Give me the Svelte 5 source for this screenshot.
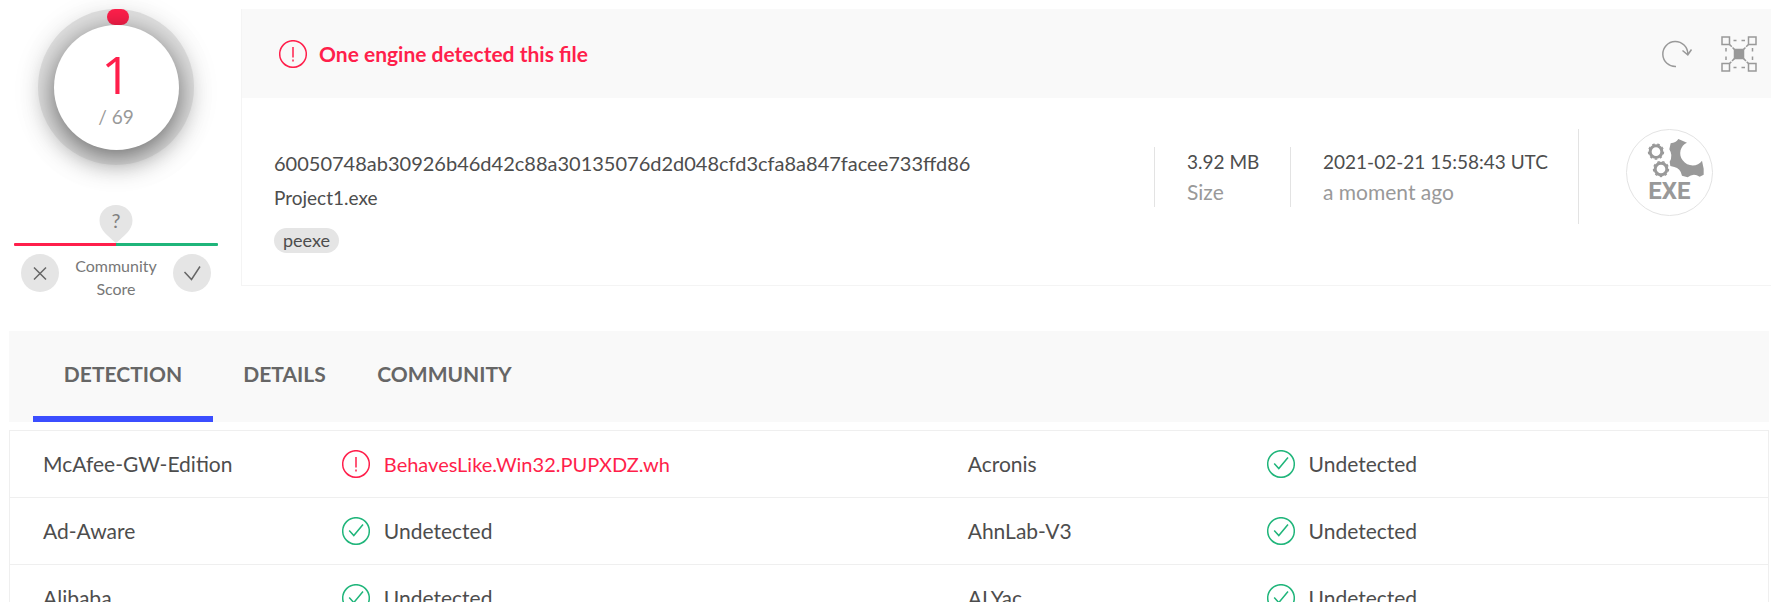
<script>

let tabs = ['Detection', 'Details', 'Community'];
let active = 'Detection';

let engines = [
  ['McAfee-GW-Edition', 'BehavesLike.Win32.PUPXDZ.wh', 'Acronis', ''],
  ['Ad-Aware', '', 'AhnLab-V3', ''],
  ['Alibaba', '', 'ALYac', ''],
];

</script>

{#snippet verdictIcon(bad)}
  <svg class="verdict-icon {bad ? 'bad' : 'good'}" viewBox="0 0 28 28" aria-hidden="true">
    <circle cx="14" cy="14" r="13.3" />
    {#if bad}
      <path d="M14 7v10.5M14 19.5v2" />
    {:else}
      <path d="M7.2 13.6l4.6 5L21 7.6" />
    {/if}
  </svg>
{/snippet}

{#snippet verdict(name)}
  <div class="verdict">
    {@render verdictIcon(name)}
    <span class={name ? 'danger' : ''}>{name || 'Undetected'}</span>
  </div>
{/snippet}

<div class="page">
  <div class="summary">
    <aside>
      <div class="ring">
        <div class="ring-mark"></div>
        <div class="ring-inner">
          <strong>1</strong>
          <span>/ 69</span>
        </div>
      </div><!--ring-->
      <svg class="pin" viewBox="0 0 34 38" role="img" aria-label="Unknown score">
        <path d="M17 0C7.600 0 .5 6.500 .5 15.500C.5 25 9 31 17 38C25 31 33.500 25 33.500 15.500C33.500 6.500 26.400 0 17 0Z" fill="#e5e5e5" />
        <text x="17" y="23" text-anchor="middle">?</text>
      </svg>
      <div class="score-bar"></div>
      <div class="score">
        <button aria-label="Vote harmful">
          <svg viewBox="0 0 38 38"><path d="M13 13.500l12 12M25 13.500l-12 12" /></svg>
        </button>
        <span>Community Score</span>
        <button aria-label="Vote harmless">
          <svg viewBox="0 0 38 38"><path d="M11.500 18l7 7.500L27 12.500" /></svg>
        </button>
      </div><!--score-->
    </aside>

    <section class="card">
      <header>
        {@render verdictIcon(true)}
        <h1>One engine detected this file</h1>
        <button aria-label="Reanalyze">
          <svg width="32" height="28" viewBox="0 0 32 28">
            <path d="M15 26.500A12.500 12.500 0 1 1 26.800 14M21.500 10.500l5.300 4.300L30.500 9.500" fill="none" stroke="#999" stroke-width="1.500" />
          </svg>
        </button>
        <button aria-label="Open in graph">
          <svg width="36" height="36" viewBox="0 0 36 36" fill="none" stroke="#999" stroke-width="1.500">
            <path d="M8 8l20 20M28 8L8 28" stroke-dasharray="4 1" />
            <path d="M12.500 4.500h3M20.500 4.500h3.500M12.500 31.500h3M20.500 31.500h3.500M5 12v3.500M5 20.500v3.500M31.500 12v3.500M31.500 20.500v3.500" />
            <path d="M1 1h7.500v7.500H1zM27.500 1H35v7.500h-7.500zM1 27.500h7.500V35H1zM27.500 27.500H35V35h-7.500z" />
            <rect x="13.500" y="13.500" width="9" height="9" fill="#999" />
          </svg>
        </button>
      </header>
      <div class="card-body">
        <div class="file">
          <div class="hash">60050748ab30926b46d42c88a30135076d2d048cfd3cfa8a847facee733ffd86</div>
          <div class="filename">Project1.exe</div>
          <a class="chip" href="#peexe">peexe</a>
        </div>
        <div class="meta size">
          <div>3.92 MB</div>
          <div class="muted">Size</div>
        </div>
        <div class="meta date">
          <div>2021-02-21 15:58:43 UTC</div>
          <div class="muted">a moment ago</div>
        </div>
        <div class="file-type">
          <svg viewBox="198 57 261 261" role="img" aria-label="EXE file">
            <circle cx="328.500" cy="187.500" r="129" fill="#fff" stroke="#e3e3e3" stroke-width="3" />
            <g fill="none" stroke="#999">
              <circle cx="288" cy="125" r="17.500" stroke-width="9" />
              <circle cx="288" cy="125" r="22.500" stroke-width="4" pathLength="18" stroke-dasharray="1 1" />
              <circle cx="303" cy="177" r="17.500" stroke-width="9" />
              <circle cx="303" cy="177" r="22.500" stroke-width="4" pathLength="18" stroke-dasharray="1 1" />
            </g>
            <path fill="#999" d="M355 87L381 98C361 106 354 133 368 151C383 172 414 171 426 152L431 176V194L419 200Q400 188 383 202L366 197Q361 174 343 171L331 168L329 155Q340 137 328 118L332 100Q348 98 355 87Z" />
            <text x="328" y="267" text-anchor="middle">EXE</text>
          </svg>
        </div>
      </div><!--card-body-->
    </section>
  </div><!--summary-->

  <nav>
    {#each tabs as tab}
      <button class="tab {tab.toLowerCase()} {tab == active ? 'active' : ''}" on:click={() => active = tab}>{tab}</button>
    {/each}
  </nav>

  <table>
    <tbody>
      {#each engines as row}
        <tr>
          <td class="engine first">{row[0]}</td>
          <td class="result">{@render verdict(row[1])}</td>
          <td class="engine">{row[2]}</td>
          <td>{@render verdict(row[3])}</td>
        </tr>
      {/each}
    </tbody>
  </table>
</div><!--page-->

<style>

:global(body) {
  margin: 0;
  background: #fff;
}

.page {
  height: 100vh;
  box-sizing: border-box;
  overflow: hidden;
  padding: 9px 15px 0 9px;
  font-family: Lato, sans-serif;
  font-size: 20px;
  line-height: 30px;
  color: #4d4d4d;
}

button {
  font: inherit;
  color: inherit;
  border: 0;
  padding: 0;
  background: none;
  cursor: pointer;
}

svg {
  display: block;
}

.summary {
  display: flex;
  gap: 18px;
}

aside {
  width: 214px;
  flex: none;
  display: flex;
  flex-direction: column;
  align-items: center;
  margin-bottom: -14px;
}

.ring {
  position: relative;
  width: 156px;
  height: 156px;
  border-radius: 50%;
  background: #e0e0e0;
  display: grid;
  place-items: center;
  box-shadow: 0 4px 28px rgba(0,0,0,0.1);
}

.ring-mark {
  position: absolute;
  top: 0;
  left: 69px;
  width: 22px;
  height: 16px;
  border-radius: 8px;
  background: #ff1f4b;
}

.ring-inner {
  position: relative;
  width: 125px;
  height: 125px;
  border-radius: 50%;
  background: #fff;
  display: flex;
  flex-direction: column;
  align-items: center;
  box-shadow: 0 7px 28px rgba(0,0,0,0.55);
}

.ring-inner strong {
  margin-top: 20px;
  font-family: "Open Sans", sans-serif;
  font-size: 52px;
  line-height: 57px;
  font-weight: normal;
  color: #ff1f4b;
}

.ring-inner span {
  font-size: 19px;
  color: #999;
}

.pin {
  width: 34px;
  height: 38px;
  margin-top: 40px;
}

.pin text {
  font-size: 20px;
  fill: #808080;
}

.score-bar {
  width: 204px;
  height: 3px;
  border-radius: 1px;
  background: linear-gradient(to right, #ff1f4b 50%, #1fb57a 50%);
}

.score {
  display: flex;
  gap: 8px;
  margin-top: 8px;
  font-size: 16px;
  line-height: 23px;
  text-align: center;
  color: #777;
}

.score span {
  width: 98px;
}

.score button {
  width: 38px;
  height: 38px;
  border-radius: 50%;
  background: #e5e5e5;
}

.score path {
  fill: none;
  stroke: #666;
  stroke-width: 1.5;
}

.card {
  flex: 1;
  border: 1px solid #f4f4f4;
  border-width: 0 0 1px 1px;
}

header {
  display: flex;
  align-items: center;
  gap: 12px;
  height: 89px;
  box-sizing: border-box;
  padding: 0 14px 0 37px;
  background: #f9f9f9;
}

h1 {
  flex: 1;
  margin: 0;
  font-size: 21px;
  font-weight: bold;
  color: #ff1f4b;
}

header button + button {
  margin-left: 16px;
}

.verdict-icon {
  width: 28px;
  height: 28px;
  flex: none;
  fill: none;
  stroke-width: 1.5;
}

.bad {
  stroke: #ff1f4b;
}

.good {
  stroke: #1fb57a;
}

.card-body {
  display: flex;
  align-items: flex-start;
  padding: 31px 0 32px;
}

.file {
  flex: 1;
  padding: 19px 0 0 32px;
}

.filename {
  margin-top: 5px;
  font-size: 19px;
}

.chip {
  display: block;
  width: fit-content;
  margin-top: 15px;
  padding: 0 9px;
  border-radius: 13px;
  font-size: 18px;
  line-height: 25px;
  color: inherit;
  text-decoration: none;
  background: #e5e5e5;
}

.meta {
  box-sizing: border-box;
  margin-top: 18px;
  padding-left: 32px;
  border-left: 1px solid #e3e3e3;
  font-size: 19px;
}

.meta.size {
  width: 136px;
}

.meta.date {
  width: 288px;
}

.muted {
  font-size: 21px;
  color: #999;
}

.file-type {
  padding: 0 58px 8px 47px;
  border-left: 1px solid #e3e3e3;
}

.file-type svg {
  width: 87px;
  height: 87px;
}

.file-type text {
  font: bold 72px Roboto, sans-serif;
  fill: #999;
}

nav {
  display: flex;
  height: 91px;
  margin: 45px 2px 8px 0;
  padding-left: 24px;
  background: #f9f9f9;
}

.tab {
  box-sizing: border-box;
  padding: 0 0 6px;
  font-size: 21px;
  font-weight: bold;
  text-transform: uppercase;
  color: #666;
}

.tab.detection {
  width: 180px;
}

.tab.details {
  width: 143px;
}

.tab.community {
  width: 177px;
}

.tab.active {
  padding-bottom: 0;
  border-bottom: 6px solid #3b4eff;
}

table {
  width: calc(100% - 2px);
  table-layout: fixed;
  border-collapse: separate;
  border-spacing: 0;
  border: 1px solid #efefef;
  font-size: 21px;
}

td {
  height: 66px;
  padding: 0;
  border-bottom: 1px solid #efefef;
}

tr {
  height: 67px;
}

.engine {
  width: 17%;
}

.engine.first {
  padding-left: 33px;
}

.result {
  width: 35.6%;
}

.verdict {
  display: flex;
  align-items: center;
  gap: 14px;
}

.danger {
  font-size: 20px;
  color: #ff1f4b;
}

</style>
